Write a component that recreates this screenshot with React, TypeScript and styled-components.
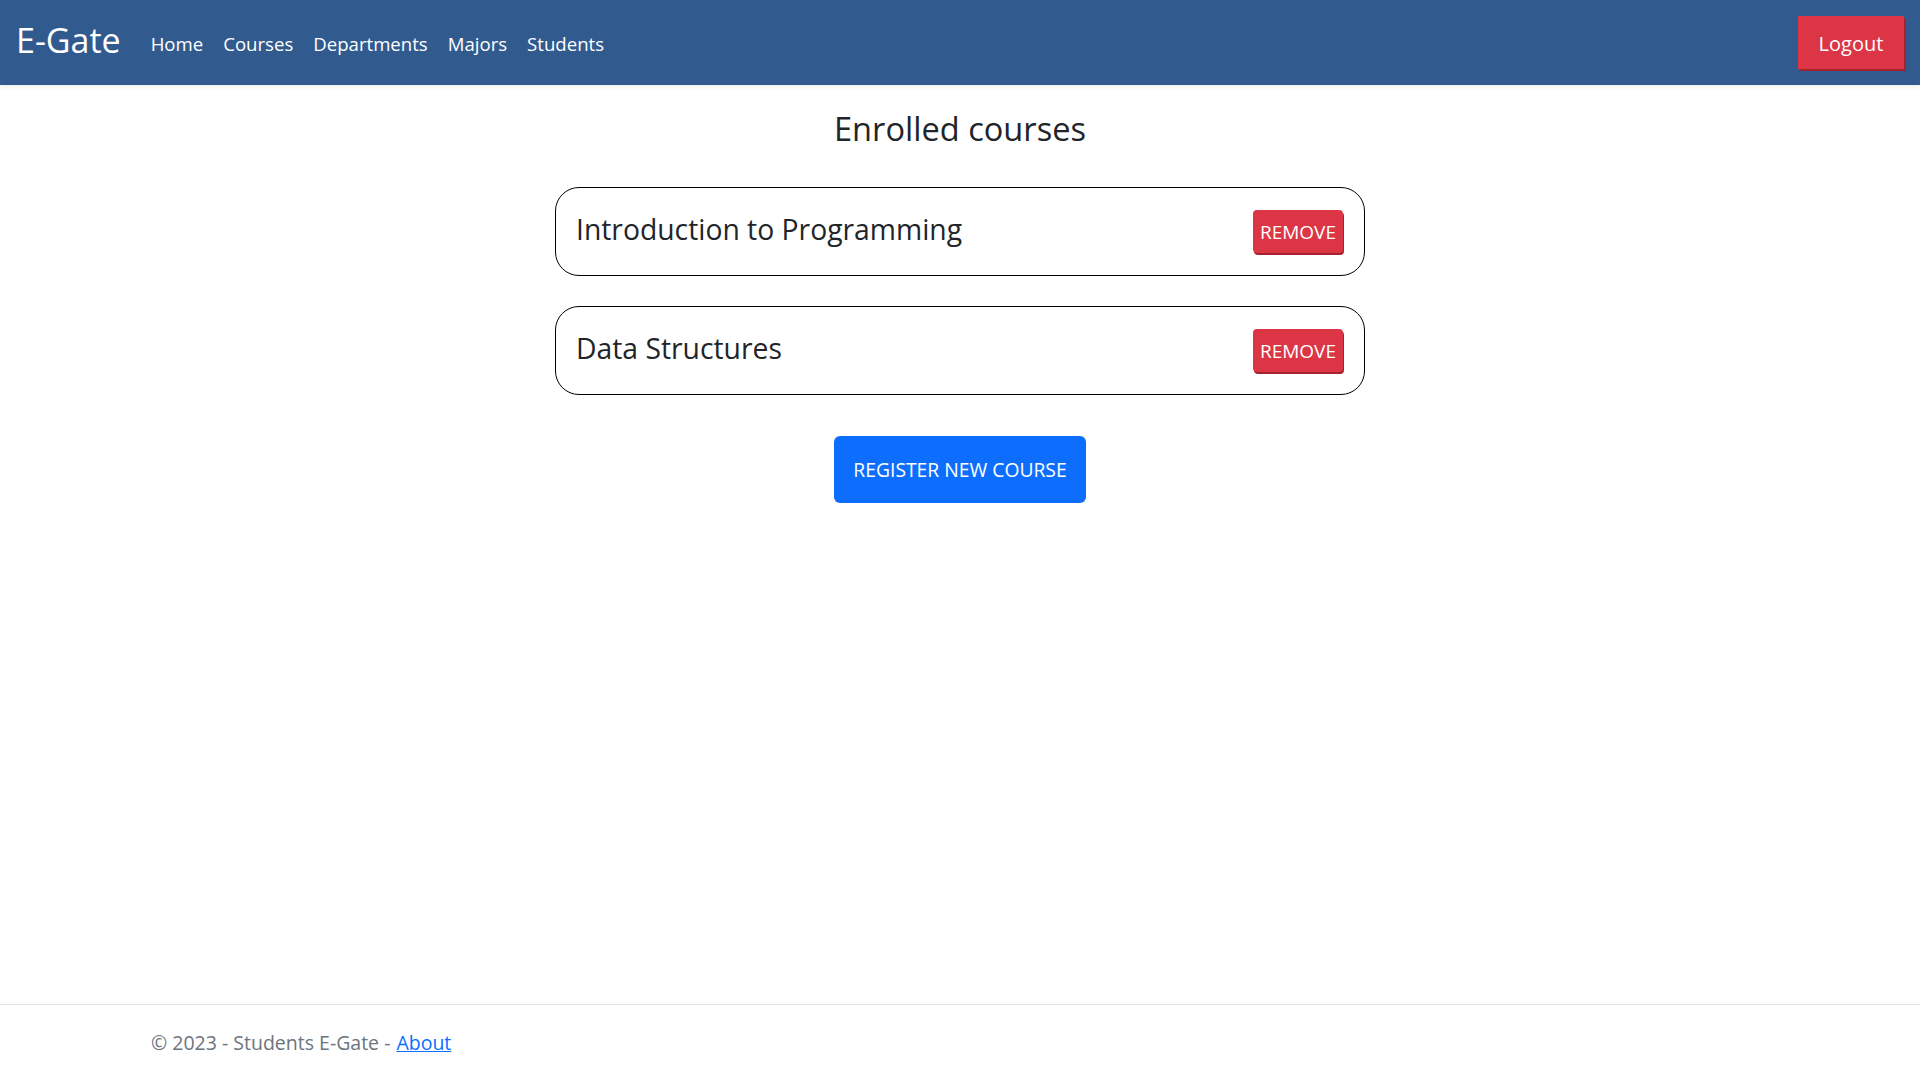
import React from "react";
import styled, { createGlobalStyle } from "styled-components";

const GlobalStyle = createGlobalStyle`
  html, body { margin: 0; padding: 0; }
  body {
    font-family: "Open Sans", "Noto Sans", sans-serif;
    color: #212529;
    background: #ffffff;
  }
  * { box-sizing: border-box; }
`;

const Page = styled.div`
  min-height: 100vh;
  display: flex;
  flex-direction: column;
`;

const NavBar = styled.header`
  height: 85px;
  background: #315a8f;
  display: flex;
  align-items: center;
  padding: 0 16px;
  box-shadow: 0 2px 4px rgba(0, 0, 0, 0.08);
`;

const Brand = styled.a`
  font-size: 34px;
  color: #ffffff;
  text-decoration: none;
  margin-right: 20px;
  margin-top: -6px;
`;

const NavList = styled.nav`
  display: flex;
  align-items: center;
  flex: 1;
`;

const NavLink = styled.a`
  font-size: 18.6px;
  color: #ffffff;
  text-decoration: none;
  padding: 0 10px;
  margin-top: 2px;
`;

const LogoutButton = styled.button`
  width: 106px;
  height: 53px;
  background: #dc3545;
  color: #ffffff;
  border: none;
  border-radius: 0;
  box-shadow: 2px 2px 0 #a5232f;
  font-family: inherit;
  font-size: 20px;
  padding-top: 2px;
  cursor: pointer;
`;

const Main = styled.main`
  flex: 1;
  display: flex;
  flex-direction: column;
  align-items: center;
  padding-top: 23px;
`;

const Title = styled.h2`
  margin: 0 0 37px;
  font-size: 32.6px;
  font-weight: 400;
  line-height: 1.3;
`;

const CourseList = styled.div`
  width: 810px;
  display: flex;
  flex-direction: column;
  gap: 30px;
`;

const CourseCard = styled.div`
  height: 89px;
  border: 1px solid #000000;
  border-radius: 24px;
  display: flex;
  align-items: center;
  justify-content: space-between;
  padding: 0 21px 0 20px;
`;

const CourseName = styled.span`
  font-size: 28.3px;
  margin-top: -6px;
`;

const RemoveButton = styled.button`
  width: 90px;
  height: 43px;
  background: #dc3545;
  color: #ffffff;
  border: none;
  border-radius: 4px;
  box-shadow: 1px 2px 0 #a5232f;
  font-family: inherit;
  font-size: 19px;
  cursor: pointer;
`;

const RegisterButton = styled.button`
  margin-top: 41px;
  width: 252px;
  height: 67px;
  background: #0d6efd;
  color: #ffffff;
  border: none;
  border-radius: 6px;
  font-family: inherit;
  font-size: 19.3px;
  cursor: pointer;
`;

const Footer = styled.footer`
  height: 76px;
  border-top: 1px solid #dee2e6;
  display: flex;
  align-items: center;
  padding: 0 151px;
  color: #6c757d;
  font-size: 19.5px;
`;

const FooterLink = styled.a`
  color: #0d6efd;
  text-decoration: underline;
  margin-left: 6px;
`;

const navItems = ["Home", "Courses", "Departments", "Majors", "Students"];
const courses = ["Introduction to Programming", "Data Structures"];

export default function App() {
  return (
    <Page>
      <GlobalStyle />
      <NavBar>
        <Brand href="#">E-Gate</Brand>
        <NavList>
          {navItems.map((item) => (
            <NavLink key={item} href="#">
              {item}
            </NavLink>
          ))}
        </NavList>
        <LogoutButton>Logout</LogoutButton>
      </NavBar>
      <Main>
        <Title>Enrolled courses</Title>
        <CourseList>
          {courses.map((c) => (
            <CourseCard key={c}>
              <CourseName>{c}</CourseName>
              <RemoveButton>REMOVE</RemoveButton>
            </CourseCard>
          ))}
        </CourseList>
        <RegisterButton>REGISTER NEW COURSE</RegisterButton>
      </Main>
      <Footer>
        © 2023 - Students E-Gate -<FooterLink href="#">About</FooterLink>
      </Footer>
    </Page>
  );
}
